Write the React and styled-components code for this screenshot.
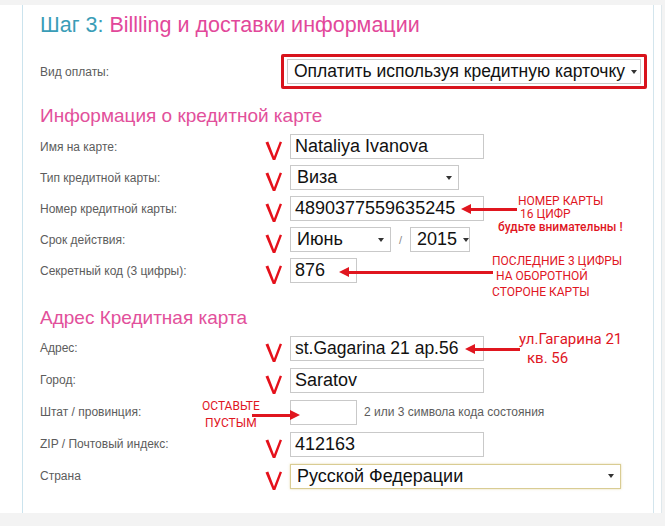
import styled, { createGlobalStyle } from "styled-components";

const GlobalStyle = createGlobalStyle`
  html, body {
    margin: 0;
    padding: 0;
    background: #fff;
    font-family: "Liberation Sans", Arial, sans-serif;
  }
`;

const Page = styled.div`
  width: 665px;
  height: 526px;
  background: #f3f3f3;
  padding-top: 5px;
  box-sizing: border-box;
  overflow: hidden;
`;

const Sheet = styled.div`
  background: #fff;
  height: 508px;
  padding-left: 22px;
  width: 662px;
  box-sizing: border-box;
  border-right: 1px solid #dfe8ec;
`;

const Panel = styled.section`
  width: 632px;
  height: 100%;
  box-sizing: border-box;
  border-left: 1px solid #cbe3ed;
  border-right: 1px solid #d3e5ed;
  padding-left: 17px;
`;

const Title = styled.h1`
  margin: 0;
  padding: 7px 0 5px;
  font-size: 21.5px;
  line-height: 26px;
  font-weight: normal;
  color: #e2489a;

  span {
    color: #3a9db7;
  }
`;

const SectionTitle = styled.h2`
  margin: ${(p) => p.$top}px 0 ${(p) => p.$bottom}px;
  font-size: 19px;
  line-height: 24px;
  font-weight: normal;
  color: #e2509b;
`;

const PayRow = styled.div`
  display: grid;
  grid-template-columns: 241px auto;
  align-items: center;
  margin-top: 11px;
  height: 35px;
`;

const Row = styled.div`
  position: relative;
  display: grid;
  grid-template-columns: 225px 25px 1fr;
  align-items: center;
  height: ${(p) => p.$h}px;
`;

const Label = styled.label`
  font-size: 12px;
  color: #5c5c5c;
`;

const Mark = styled.div`
  height: 25px;
  display: flex;
  align-items: flex-end;
  padding-top: 4px;
`;

const Field = styled.div`
  display: flex;
  align-items: center;
  gap: 7px;
`;

const Input = styled.div`
  box-sizing: border-box;
  width: ${(p) => p.$w}px;
  height: 25px;
  border: 1px solid #c9c9c9;
  padding: 0 4px;
  font-size: ${(p) => p.$size || 18}px;
  line-height: 23px;
  color: #111;
  white-space: nowrap;
`;

const Select = styled.div`
  box-sizing: border-box;
  width: ${(p) => p.$w}px;
  height: 25px;
  border: 1px solid ${(p) => (p.$warm ? "#d9cc93" : "#c9c9c9")};
  box-shadow: ${(p) => (p.$warm ? "0 0 2px rgba(210, 190, 110, 0.6)" : "none")};
  padding: 0 6px 0 6px;
  display: flex;
  align-items: center;
  justify-content: space-between;
  font-size: ${(p) => p.$size || 18}px;
  color: #111;
  white-space: nowrap;
  background: #fff;
`;

const Caret = styled.span`
  width: 0;
  height: 0;
  border-left: 3px solid transparent;
  border-right: 3px solid transparent;
  border-top: 4px solid #333;
  margin-left: 6px;
`;

const RedFrame = styled.div`
  box-sizing: border-box;
  width: 366px;
  height: 35px;
  border: 3px solid #d8131c;
  border-radius: 2px;
  padding: 2px 3px;
`;

const Slash = styled.span`
  font-size: 11px;
  color: #888;
  margin: 0 1px;
`;

const Hint = styled.span`
  font-size: 12px;
  color: #5c5c5c;
`;

const Note = styled.div`
  position: absolute;
  left: ${(p) => p.$x - 40}px;
  top: ${(p) => p.$y}px;
  font-family: Roboto, "Open Sans", sans-serif;
  font-size: ${(p) => p.$size || 12}px;
  line-height: ${(p) => (p.$size ? p.$size + 3 : 14)}px;
  color: #e0161f;
  white-space: nowrap;
  font-weight: ${(p) => (p.$bold ? 500 : 400)};
`;

const Arrow = styled.div`
  position: absolute;
  left: ${(p) => p.$x - 40}px;
  top: ${(p) => p.$y - 1}px;
  width: ${(p) => p.$w}px;
  height: 3px;
  background: #e0161f;

  &::before {
    content: "";
    position: absolute;
    top: -4px;
    ${(p) => (p.$right ? "right: -4px;" : "left: -4px;")}
    border-top: 5.5px solid transparent;
    border-bottom: 5.5px solid transparent;
    ${(p) =>
      p.$right
        ? "border-left: 10px solid #e0161f;"
        : "border-right: 10px solid #e0161f;"}
  }
`;

const Check = () => (
  <svg width="18" height="21" viewBox="0 0 18 21">
    <polygon
      points="0.5,2.5 3.3,1.5 9,16.5 14.8,1.5 17,2.3 10.3,20 7.8,20"
      fill="#e5111b"
    />
  </svg>
);

const FormRow = ({ label, check = true, h, children, notes }) => (
  <Row $h={h}>
    <Label>{label}</Label>
    <Mark>{check && <Check />}</Mark>
    <Field>{children}</Field>
    {notes}
  </Row>
);

const App = () => {
  return (
    <>
      <GlobalStyle />
      <Page>
        <Sheet>
          <Panel>
            <Title>
              <span>Шаг 3:</span> Billling и доставки информации
            </Title>

            <PayRow>
              <Label>Вид оплаты:</Label>
              <RedFrame>
                <Select $w={354} $size={17.5}>
                  Оплатить используя кредитную карточку
                  <Caret />
                </Select>
              </RedFrame>
            </PayRow>

            <SectionTitle $top={15} $bottom={3}>
              Информация о кредитной карте
            </SectionTitle>

            <FormRow label="Имя на карте:" h={31}>
              <Input $w={194}>Nataliya Ivanova</Input>
            </FormRow>
            <FormRow label="Тип кредитной карты:" h={31}>
              <Select $w={169}>
                Виза
                <Caret />
              </Select>
            </FormRow>
            <FormRow
              label="Номер кредитной карты:"
              h={31}
              notes={
                <>
                  <Arrow $x={465} $y={16} $w={52} />
                  <Note $x={518} $y={1}>НОМЕР КАРТЫ</Note>
                  <Note $x={520} $y={14}>16 ЦИФР</Note>
                  <Note $x={498} $y={27} $bold>
                    будьте внимательны !
                  </Note>
                </>
              }
            >
              <Input $w={194}>4890377559635245</Input>
            </FormRow>
            <FormRow label="Срок действия:" h={31}>
              <Select $w={101}>
                Июнь
                <Caret />
              </Select>
              <Slash>/</Slash>
              <Select $w={60}>
                2015
                <Caret />
              </Select>
            </FormRow>
            <FormRow
              label="Секретный код (3 цифры):"
              h={31}
              notes={
                <>
                  <Arrow $x={343} $y={17} $w={150} />
                  <Note $x={492} $y={-1}>ПОСЛЕДНИЕ 3 ЦИФРЫ</Note>
                  <Note $x={496} $y={14}>НА ОБОРОТНОЙ</Note>
                  <Note $x={492} $y={30}>СТОРОНЕ КАРТЫ</Note>
                </>
              }
            >
              <Input $w={67}>876</Input>
            </FormRow>

            <SectionTitle $top={20} $bottom={2}>
              Адрес Кредитная карта
            </SectionTitle>

            <FormRow
              label="Адрес:"
              h={32}
              notes={
                <>
                  <Arrow $x={469} $y={17} $w={51} />
                  <Note $x={519} $y={-2} $size={15}>
                    ул.Гагарина 21
                  </Note>
                  <Note $x={527} $y={17} $size={15}>
                    кв. 56
                  </Note>
                </>
              }
            >
              <Input $w={194} $size={17.5}>
                st.Gagarina 21 ap.56
              </Input>
            </FormRow>
            <FormRow label="Город:" h={32}>
              <Input $w={194}>Saratov</Input>
            </FormRow>
            <FormRow
              label="Штат / провинция:"
              h={32}
              check={false}
              notes={
                <>
                  <Note $x={202} $y={3}>ОСТАВЬТЕ</Note>
                  <Note $x={205} $y={20}>ПУСТЫМ</Note>
                  <Arrow $x={252} $y={19} $w={44} $right />
                </>
              }
            >
              <Input $w={67} />
              <Hint>2 или 3 символа кода состояния</Hint>
            </FormRow>
            <FormRow label="ZIP / Почтовый индекс:" h={32}>
              <Input $w={194}>412163</Input>
            </FormRow>
            <FormRow label="Страна" h={32}>
              <Select $w={331} $warm>
                Русской Федерации
                <Caret />
              </Select>
            </FormRow>
          </Panel>
        </Sheet>
      </Page>
    </>
  );
};

export default App;
